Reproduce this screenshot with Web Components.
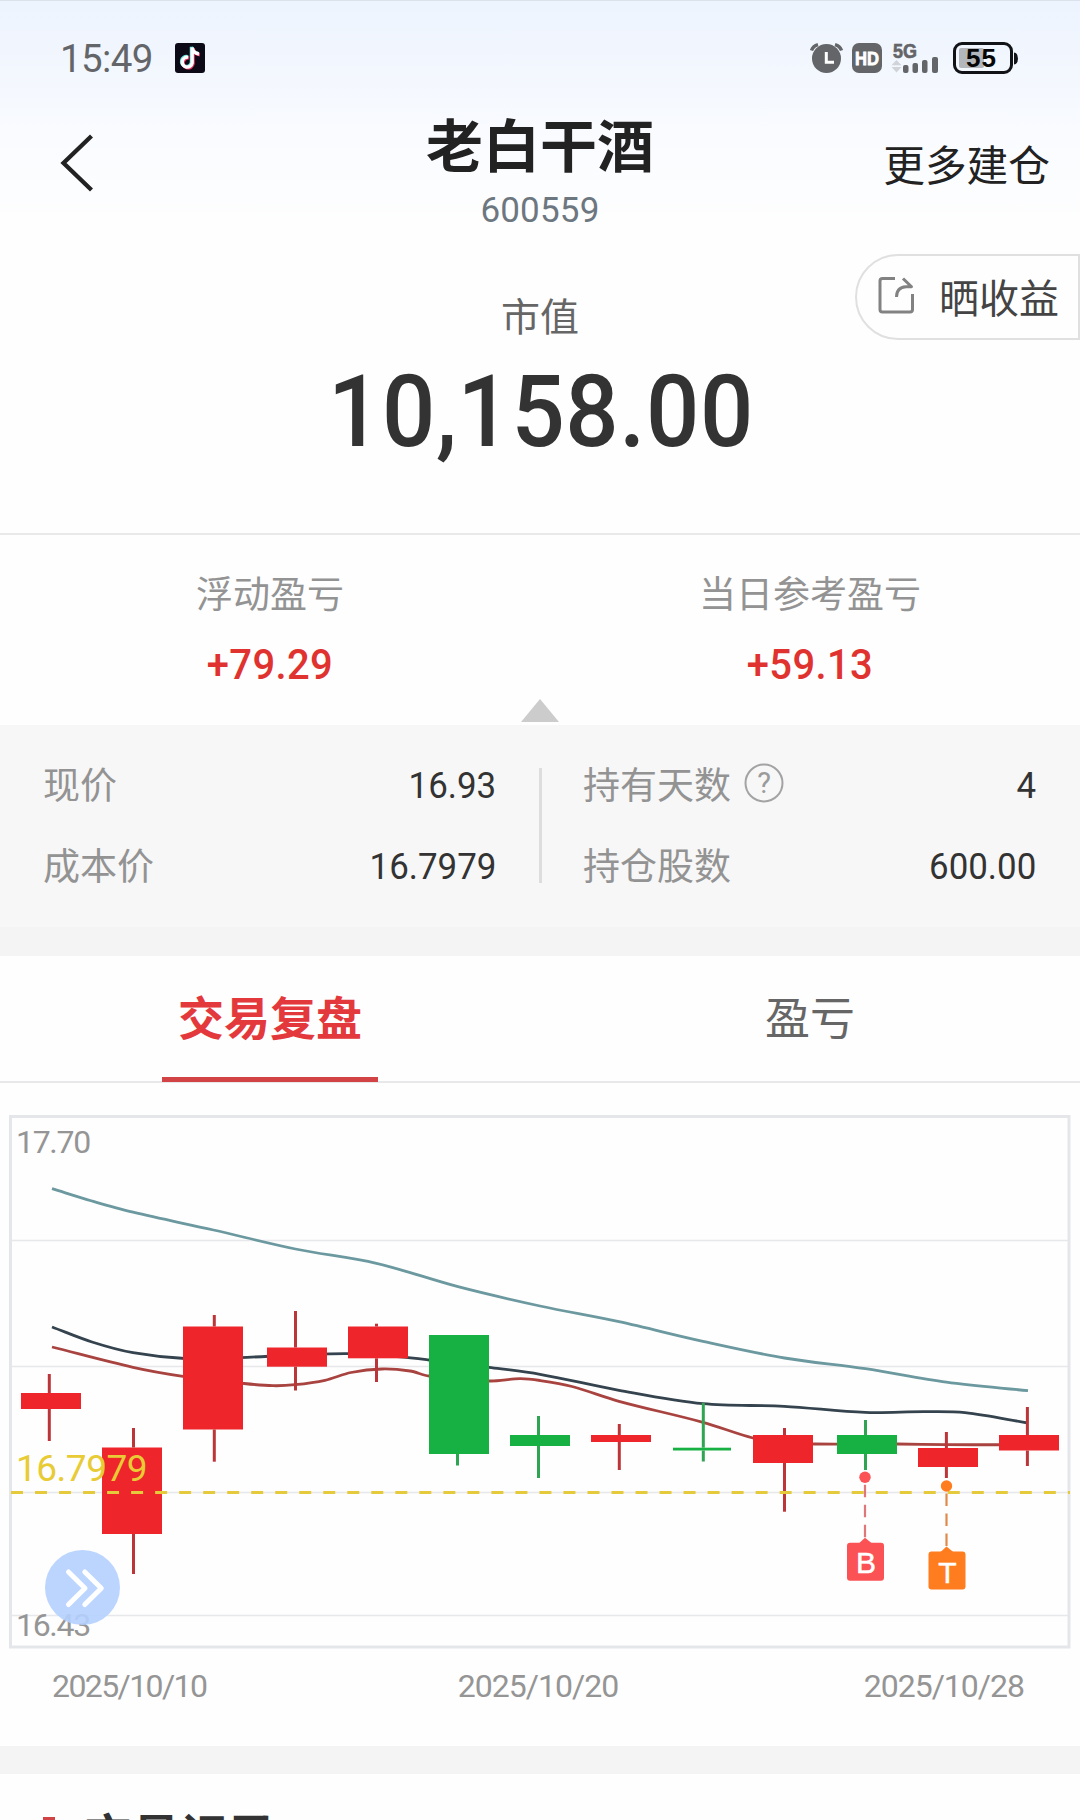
<!DOCTYPE html>
<html lang="zh-CN">
<head>
<meta charset="utf-8">
<meta name="viewport" content="width=1080">
<title>老白干酒 600559</title>
<style>
  html, body{ margin:0; padding:0; }
  body{
    --red:#e0322f;
    --ink:#222;
    --muted:#939393;
    --band:#f4f4f4;
    width:1080px;
    height:1820px;
    overflow:hidden;
    background:#fefefe;
    font-family:Roboto, "Noto Sans CJK SC", sans-serif;
    color:var(--ink);
  }
</style>
</head>
<body>
<holding-page></holding-page>

<script>
/* ============================================================
   Base
   ============================================================ */
class BaseElement extends HTMLElement{
  constructor(){
    super();
    this.attachShadow({mode:"open"});
  }
  connectedCallback(){ this.shadowRoot.innerHTML = this.template(); }
  attr(name){ return this.getAttribute(name) || ""; }
}

/* ============================================================
   Status bar
   ============================================================ */
customElements.define("status-bar", class extends BaseElement{
  template(){
    return `
      <style>
        :host{ display:flex; align-items:center; height:100px; padding:15px 61px 0 60px; box-sizing:border-box; }
        .time{ font-size:38.5px; line-height:44px; letter-spacing:-.6px; padding-top:2px; color:#636568; width:115px; }
        .right{ margin-left:auto; display:flex; }
        svg{ display:block; }
        text{ font-family:"Liberation Sans", sans-serif; font-weight:700; }
      </style>
      <span class="time">15:49</span>
      <svg width="30" height="30" viewBox="0 0 30 30">
        <rect width="30" height="30" rx="3" fill="#0b0a16"/>
        <g fill="none" stroke-width="3.3">
          <g stroke="#5fe0dc" transform="translate(-.8 -.7)"><path d="M13.2 14.2A5 5 0 1 0 17.2 20V4.5M17.2 4.5Q18 10 24 11"/></g>
          <g stroke="#e8345f" transform="translate(.9 .8)"><path d="M13.2 14.2A5 5 0 1 0 17.2 20V4.5M17.2 4.5Q18 10 24 11"/></g>
          <path stroke="#fff" d="M13.2 14.2A5 5 0 1 0 17.2 20V4.5M17.2 4.5Q18 10 24 11"/>
        </g>
      </svg>
      <svg class="right" width="210" height="34" viewBox="809 41 210 34">
        <g fill="#636568">
          <circle cx="826.5" cy="58.6" r="14.5"/>
          <path d="M811.5 50.5Q813 46 818 44.6M835 44.6Q840 46 841.5 50.5" fill="none" stroke="#636568" stroke-width="3.4"/>
          <path d="M826.3 52V62.2H834" fill="none" stroke="#fff" stroke-width="3"/>
          <rect x="852" y="43" width="30" height="30" rx="7"/>
          <text x="893" y="57.5" font-size="19.5" textLength="24" lengthAdjust="spacingAndGlyphs" stroke="#636568" stroke-width=".6">5G</text>
          <rect x="903" y="65" width="5.5" height="8" rx="2"/>
          <rect x="912.5" y="63" width="5.5" height="10" rx="2"/>
          <rect x="922" y="60" width="5.5" height="13" rx="2"/>
          <rect x="932" y="57" width="6" height="16" rx="2"/>
          <path d="M896.5 60L901.5 65.2H891.5ZM891.5 67H901.5L896.5 72.5Z" fill="#d0d3d7"/>
        </g>
        <text x="855" y="64.8" font-size="18.5" fill="#fff" stroke="#fff" stroke-width=".8" textLength="24" lengthAdjust="spacingAndGlyphs">HD</text>
        <rect x="954.5" y="43.5" width="57" height="29" rx="7.5" fill="none" stroke="#121316" stroke-width="3"/>
        <rect x="959" y="48" width="25" height="20" rx="2" fill="#b3b7bb"/>
        <text x="966" y="67" font-size="26" fill="#060606" textLength="30">55</text>
        <path d="M1014 52.5Q1018 53 1018 58.5T1014 64.5Z" fill="#121316"/>
      </svg>
    `;
  }
});

/* ============================================================
   Title bar
   ============================================================ */
customElements.define("nav-bar", class extends BaseElement{
  template(){
    return `
      <style>
        :host{ display:grid; grid-template-columns:1fr auto 1fr; height:140px; }
        .back{ padding:34px 0 0 60px; }
        .mid{ padding-top:17px; text-align:center; }
        h1{ margin:0; font-size:57px; line-height:62px; font-weight:700; }
        .code{ margin-top:12px; font-size:35px; line-height:40px; letter-spacing:.2px; color:#6d7780; }
        .more{ padding:42px 30px 0 0; text-align:right; font-size:41.7px; line-height:50px; }
        svg{ display:block; }
      </style>
      <div class="back">
        <svg width="34" height="60" viewBox="0 0 34 60"><path d="M31.5 2L3.5 29L31.5 56" fill="none" stroke="#222" stroke-width="4.3"/></svg>
      </div>
      <div class="mid">
        <h1><slot name="title"></slot></h1>
        <div class="code"><slot name="code"></slot></div>
      </div>
      <div class="more"><slot name="action"></slot></div>
    `;
  }
});

/* ============================================================
   Market value + share button
   ============================================================ */
customElements.define("share-button", class extends BaseElement{
  template(){
    return `
      <style>
        :host{
          display:flex; align-items:center; box-sizing:border-box;
          width:225px; height:86px; padding:0 0 0 21px;
          border:2px solid #e0e0e0; border-radius:43px 0 0 43px;
          background:#fefefe; color:#444;
        }
        svg{ margin-bottom:3px; }
        span{ margin-left:24px; font-size:40px; line-height:50px; padding-top:6px; white-space:nowrap; }
      </style>
      <svg width="37" height="37" viewBox="0 0 37 37" fill="none" stroke="#828282" stroke-width="3" stroke-linejoin="round">
        <path d="M17 1.5H4.5Q2 1.5 2 4V32.5Q2 35 4.5 35H32Q34.5 35 34.5 32.5V17"/>
        <path d="M25 1.5L33.5 9.8H28Q18.5 10.5 18.5 20"/>
      </svg>
      <span><slot></slot></span>
    `;
  }
});

customElements.define("market-value", class extends BaseElement{
  template(){
    return `
      <style>
        :host{
          display:block; position:relative; box-sizing:border-box; height:295px;
          padding-top:53px; border-bottom:2px solid #e9e9e9; text-align:center;
        }
        .label{ font-size:39px; line-height:50px; color:#666; }
        /* condensed digits */
        .value{ margin-top:19px; font-size:101px; line-height:100px; font-weight:500; letter-spacing:.6px; text-indent:2px; color:#333; transform:scaleX(.93); }
        share-button{ position:absolute; top:14px; right:0; }
      </style>
      <div class="label">${this.attr("label")}</div>
      <div class="value">${this.attr("value")}</div>
      <share-button>晒收益</share-button>
    `;
  }
});

/* ============================================================
   Profit row
   ============================================================ */
customElements.define("profit-stat", class extends BaseElement{
  template(){
    return `
      <style>
        :host{ display:block; flex:1; text-align:center; }
        .label{ font-size:37px; line-height:44px; color:var(--muted); }
        .value{ margin-top:21px; font-size:43px; line-height:50px; font-weight:500; letter-spacing:.4px; color:var(--red); transform:scaleX(.93); }
      </style>
      <div class="label">${this.attr("label")}</div>
      <div class="value"><slot></slot></div>
    `;
  }
});

customElements.define("profit-row", class extends BaseElement{
  template(){
    return `
      <style>
        :host{ display:flex; position:relative; box-sizing:border-box; height:190px; padding-top:39px; }
        .fold{ position:absolute; left:521px; bottom:3px; }
      </style>
      <slot></slot>
      <svg class="fold" width="38" height="23" viewBox="0 0 38 23"><path d="M19 0L38 23H0Z" fill="#ccc"/></svg>
    `;
  }
});

/* ============================================================
   Position details
   ============================================================ */
customElements.define("detail-item", class extends BaseElement{
  template(){
    const help = this.hasAttribute("help") ? `
      <svg width="40" height="40" viewBox="0 0 40 40">
        <circle cx="20" cy="20" r="18.5" fill="none" stroke="#a3a3a3" stroke-width="2"/>
        <text x="20" y="30" text-anchor="middle" font-size="29" fill="#9b9b9b">?</text>
      </svg>` : "";
    return `
      <style>
        :host{ display:flex; align-items:center; height:44px; line-height:44px; }
        .label{ font-size:37px; color:var(--muted); }
        .value{ margin-left:auto; margin-top:-4px; font-size:37.5px; color:#333; transform:scaleX(.93); transform-origin:right; }
        svg{ margin:-8px 0 0 13px; }
      </style>
      <span class="label">${this.attr("label")}</span>${help}
      <span class="value"><slot></slot></span>
    `;
  }
});

customElements.define("detail-panel", class extends BaseElement{
  template(){
    return `
      <style>
        :host{ display:flex; box-sizing:border-box; height:202px; padding-top:40px; background:#f7f7f7; }
        .col{ flex:1; display:flex; flex-direction:column; gap:37px; padding:0 43px; }
        .col:first-child{ padding-right:45px; }
        .col:last-child{ padding:0 44px 0 41px; }
        .line{ width:3px; height:115px; margin-top:3px; background:#ddd; }
      </style>
      <div class="col"><slot name="left"></slot></div>
      <div class="line"></div>
      <div class="col"><slot name="right"></slot></div>
    `;
  }
});

/* ============================================================
   Tabs
   ============================================================ */
customElements.define("tab-item", class extends BaseElement{
  template(){
    return `
      <style>
        :host{ flex:1; position:relative; display:flex; align-items:center; justify-content:center; padding-bottom:7px; font-size:45px; color:#666; }
        :host([active]){ padding-bottom:8px; font-size:46px; font-weight:700; color:#e4393c; }
        :host([active])::after{
          content:""; position:absolute; left:162px; bottom:-1px;
          width:216px; height:5px; background:#d24346;
        }
      </style>
      <slot></slot>
    `;
  }
});

customElements.define("tab-bar", class extends BaseElement{
  template(){
    return `
      <style>:host{ display:flex; box-sizing:border-box; height:127px; border-bottom:2px solid #e8e8ea; }</style>
      <slot></slot>
    `;
  }
});

/* ============================================================
   Candlestick chart
   ============================================================ */
// body left, body top, body bottom, wick x, wick top, wick bottom, up?
const CANDLES = [
  [21, 293, 309, 49.3, 274, 341, 1],
  [102, 347.5, 434, 133.5, 328, 474, 1],
  [183, 226.5, 329.5, 214.3, 215, 361.7, 1],
  [267, 247.5, 266.7, 295.5, 211, 290.5, 1],
  [348, 226.5, 258.3, 376.5, 223.7, 282, 1],
  [429, 235, 354, 457.5, 235, 365.5, 0],
  [510, 335, 346, 538.5, 316, 378, 0],
  [591, 335, 342, 619.3, 324, 370, 1],
  [673, 347.7, 350.5, 703.3, 303, 361.5, 0],
  [753, 335, 363, 784.5, 328, 411.7, 1],
  [837, 335, 354, 865.5, 320, 370, 0],
  [918, 348, 367, 946.4, 332, 378, 1],
  [999, 335, 350.5, 1027.4, 307, 366, 1]
];

const LINES = [
  ["#6b999f", [[52,88.7],[92,101],[133,112.2],[213.5,130],[295.5,149],[376.4,163.3],[458,186.7],[540,206],[619,221.7],[703,241.3],[784.5,258],[865.4,268.7],[946.3,282.2],[1028,290.7]]],
  ["#34434d", [[52,227],[92,242],[133,252.7],[185,258.5],[240,257.6],[295,255],[345,253.7],[376,254.7],[429,260],[489,267.3],[540,274.3],[619,290.3],[703,303.7],[784,306.3],[865,312.4],[925,311.7],[965,312.7],[1028,323]]],
  ["#a8433f", [[52,247],[133,267.3],[183,276.3],[244,283.5],[273,285.7],[295,284.7],[325,280.3],[351,272.5],[382,269],[410,271],[429,276],[489,281],[520,278.7],[540,280.5],[572,286.5],[619,301.3],[703,322.3],[753,338],[784,343],[814,344],[897,344],[946,344.7],[1028,344.7]]]
];

function smoothPath(pts){
  let d = `M${pts[0]}`;
  for (let i=0;i<pts.length-1;i++){
    const p0=pts[i-1]||pts[i], p1=pts[i], p2=pts[i+1], p3=pts[i+2]||p2;
    const h=(p2[0]-p1[0])/3;
    const s1=(p2[1]-p0[1])/(p2[0]-p0[0]), s2=(p3[1]-p1[1])/(p3[0]-p1[0]);
    d += `C${p1[0]+h} ${p1[1]+s1*h} ${p2[0]-h} ${p2[1]-s2*h} ${p2[0]} ${p2[1]}`;
  }
  return d;
}

customElements.define("trade-chart", class extends BaseElement{
  candle([x,top,bottom,wx,wTop,wBottom,up]){
    const body = up ? "#ee252b" : "#17b143";
    const wick = up ? "#bc3639" : "#2fa453";
    return `<rect x="${x}" y="${top}" width="${x===673?58:60}" height="${bottom-top}" fill="${body}"/>
      <rect x="${wx-1.5}" y="${wTop}" width="3" height="${top-wTop}" fill="${wick}"/>
      <rect x="${wx-1.5}" y="${bottom}" width="3" height="${wBottom-bottom}" fill="${wick}"/>`;
  }
  marker(x, y, letter, color, line){
    return `
      <circle cx="${x}" cy="${y}" r="5.7" fill="${color}"/>
      <path d="M${x} ${y+7.5}V${y+61}" stroke="${line}" stroke-width="2.2" stroke-dasharray="12.5 7.5"/>
      <path d="M${x-7} ${y+67}L${x} ${y+60.5}L${x+8} ${y+67}Z" fill="${color}"/>
      <rect x="${x-18}" y="${y+65.5}" width="37" height="38" rx="3" fill="${color}"/>
      <text x="${x+1}" y="${y+(letter==="T"?97:96)}" font-size="30" text-anchor="middle" class="mark">${letter}</text>`;
  }
  template(){
    return `
      <style>
        :host{ display:block; height:663px; }
        svg{ display:block; }
        .axis{ font-size:32px; fill:#959595; letter-spacing:-1.3px; }
        .cost{ font-size:37px; fill:#e8cb35; letter-spacing:-.5px; }
        .mark{ font-family:"Liberation Sans", sans-serif; fill:#fff; stroke:#fff; stroke-width:.5; }
        .dates{
          display:flex; justify-content:space-between; padding:6px 56px 0 52px;
          font-size:32px; line-height:40px; letter-spacing:-1px; color:#959595;
        }
        .dates span:first-child{ letter-spacing:-1.6px; margin-right:6px; }
      </style>
      <svg width="1080" height="577" viewBox="0 -17 1080 577">
        <path d="M12 140.5H1068M12 266.5H1068M12 392.5H1068M12 515.5H1068" stroke="#e7e8ec" stroke-width="1.5"/>
        <rect x="10.5" y="16.5" width="1058.5" height="530.5" fill="none" stroke="#e5e6e9" stroke-width="3"/>
        ${LINES.map(([c,p]) => `<path d="${smoothPath(p)}" fill="none" stroke="${c}" stroke-width="2.8"/>`).join("")}
        ${CANDLES.map(c => this.candle(c)).join("")}
        <path d="M11 392.6H1070" stroke="#e5cb3c" stroke-width="3" stroke-dasharray="12 12.02"/>
        <text x="16" y="53" class="axis">17.70</text>
        <text x="16" y="381" class="cost">16.7979</text>
        <text x="16" y="536" class="axis">16.43</text>
        ${this.marker(865, 377.3, "B", "#fb5255", "#df7779")}
        ${this.marker(946.5, 386, "T", "#ff7d1e", "#df8a4a")}
        <circle cx="82.5" cy="487.5" r="37.5" fill="#b4d0ff" fill-opacity=".9"/>
        <path d="M68.5 472L85 488.3L68.5 504.5M84.8 472L101.3 488.3L84.8 504.5" fill="none" stroke="#fff" stroke-width="5" stroke-linecap="round" stroke-linejoin="round"/>
      </svg>
      <div class="dates"><span>2025/10/10</span><span>2025/10/20</span><span>2025/10/28</span></div>
    `;
  }
});

/* ============================================================
   Section title
   ============================================================ */
customElements.define("section-title", class extends BaseElement{
  template(){
    return `
      <style>
        :host{ display:flex; padding:39px 0 0 43px; font-size:48px; line-height:50px; font-weight:700; color:#333; }
        i{ width:12px; height:40px; margin:4px 29px 0 0; background:#d24346; }
      </style>
      <i></i><slot></slot>
    `;
  }
});

/* ============================================================
   Page
   ============================================================ */
customElements.define("holding-page", class extends BaseElement{
  template(){
    return `
      <style>
        :host{ display:block; height:1820px; overflow:hidden; }
        .top{ height:240px; background:linear-gradient(#edf4fe 0, #f3f7fe 30%, #f9fbff 55%, #fefefe 95%); box-shadow:inset 0 1px #dbe2ea; }
        .band{ background:var(--band); }
      </style>
      <div class="top">
        <status-bar></status-bar>
        <nav-bar>
          <span slot="title">老白干酒</span>
          <span slot="code">600559</span>
          <span slot="action">更多建仓</span>
        </nav-bar>
      </div>
      <market-value label="市值" value="10,158.00"></market-value>
      <profit-row>
        <profit-stat label="浮动盈亏">+79.29</profit-stat>
        <profit-stat label="当日参考盈亏">+59.13</profit-stat>
      </profit-row>
      <detail-panel>
        <detail-item slot="left" label="现价">16.93</detail-item>
        <detail-item slot="left" label="成本价">16.7979</detail-item>
        <detail-item slot="right" label="持有天数" help>4</detail-item>
        <detail-item slot="right" label="持仓股数">600.00</detail-item>
      </detail-panel>
      <div class="band" style="height:29px"></div>
      <tab-bar>
        <tab-item active>交易复盘</tab-item>
        <tab-item>盈亏</tab-item>
      </tab-bar>
      <trade-chart></trade-chart>
      <div class="band" style="height:28px"></div>
      <section-title>交易记录</section-title>
    `;
  }
});
</script>
</body>
</html>
